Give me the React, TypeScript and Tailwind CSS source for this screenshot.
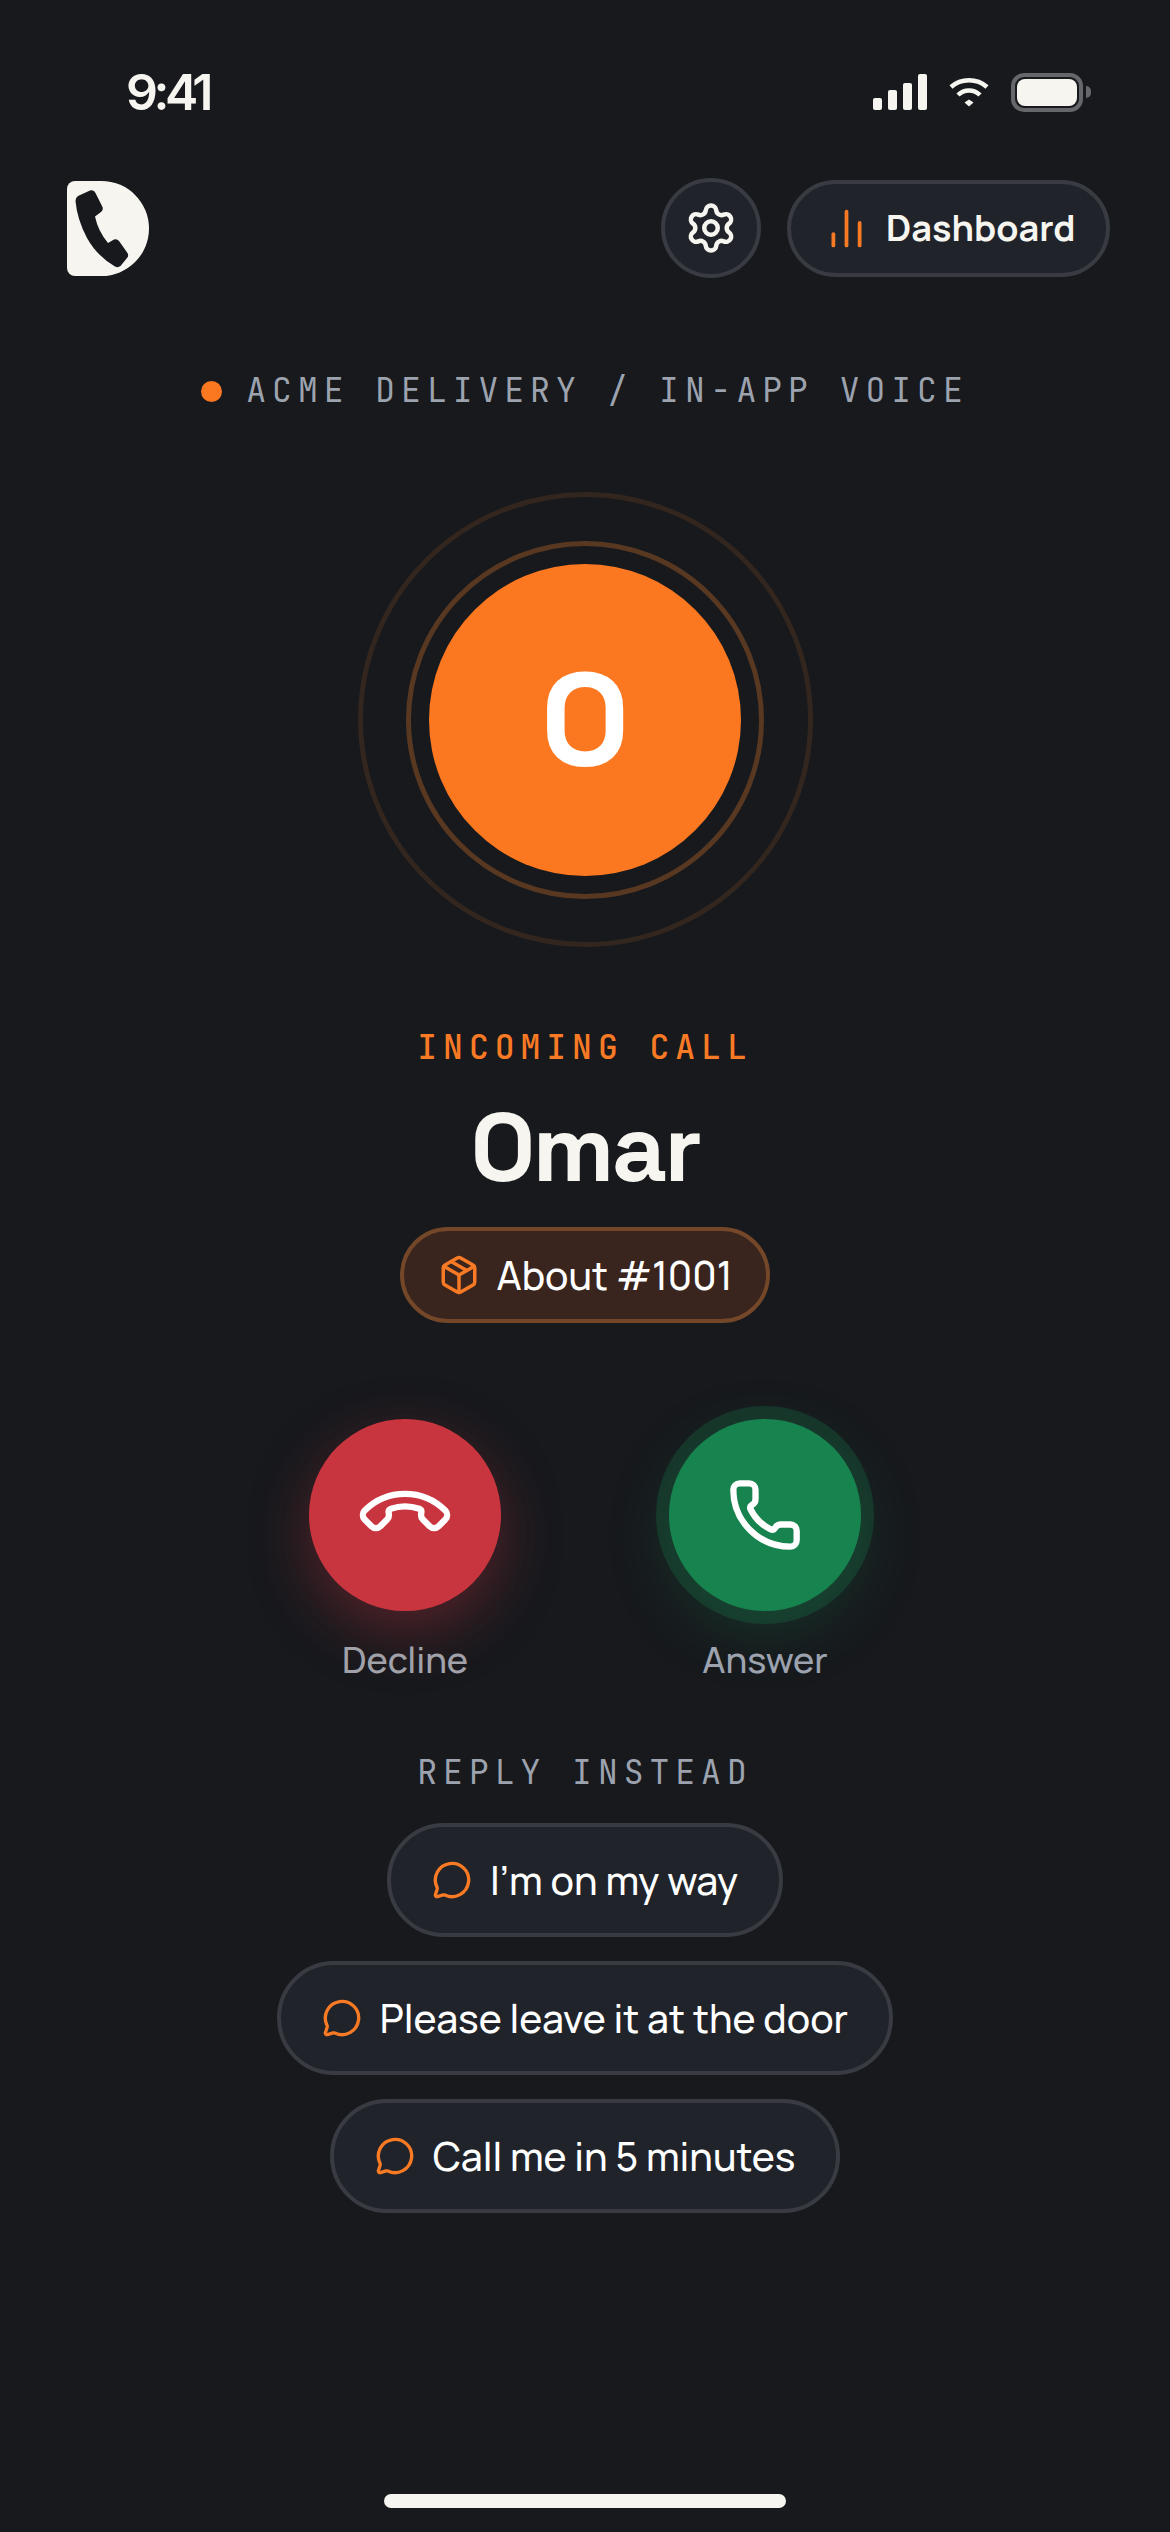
import { ChartNoAxesColumn, MessageCircle, Package, Phone, Settings } from "lucide-react";

const mono = "font-['JetBrains_Mono','Liberation_Mono',monospace]";
const display = "font-['Space_Grotesk','Inter',sans-serif]";

const replies = ["I’m on my way", "Please leave it at the door", "Call me in 5 minutes"];

const Signal: React.FC = () => (
  <div className="flex items-end gap-[6px] h-[36px]">
    <div className="w-[9px] h-[12px] rounded-[2px] bg-[#f6f5f0]" />
    <div className="w-[9px] h-[20px] rounded-[2px] bg-[#f6f5f0]" />
    <div className="w-[9px] h-[27px] rounded-[2px] bg-[#f6f5f0]" />
    <div className="w-[9px] h-[36px] rounded-[2px] bg-[#f6f5f0]" />
  </div>
);

const Wifi: React.FC = () => (
  <svg width="40" height="30" viewBox="0 0 40 30" fill="none" stroke="#f6f5f0" strokeWidth="4.5">
    <path d="M2 10C12 1 28 1 38 10" />
    <path d="M9 18C15 12 25 12 31 18" />
    <path d="M15.5 25.5L20 22.5L24.5 25.5L20 29.5Z" fill="#f6f5f0" stroke="none" />
  </svg>
);

const Battery: React.FC = () => (
  <div className="flex items-center gap-[3px]">
    <div className="w-[72px] h-[39px] rounded-[13px] border-[4px] border-[#66676a] p-[2px]">
      <div className="w-full h-full rounded-[8px] bg-[#f6f5f0]" />
    </div>
    <div className="w-[5px] h-[12px] rounded-r-full bg-[#66676a]" />
  </div>
);

const Logo: React.FC = () => (
  <svg width="82" height="95" viewBox="0 0 82 95">
    <path d="M8 0H34.5A47.5 47.5 0 0 1 34.5 95H8A8 8 0 0 1 0 87V8A8 8 0 0 1 8 0Z" fill="#f6f5f0" />
    <path
      d="M11 15L23 9.5Q27 8.5 28.5 12L35.5 26Q36.5 29 34 31L28 35.5Q31 50 41 62L47 58.5Q50 57.5 52 60L60.5 72Q62 75 60 77L53.5 85Q51 87 48 85.5Q30 75 20 57Q10 38 8.5 20Q8.5 16.5 11 15Z"
      fill="#17191d"
    />
  </svg>
);

const App: React.FC = () => {
  return (
    <div className="w-[1170px] h-[2532px] bg-[#17191d] flex flex-col font-['Manrope','Inter',sans-serif] text-[#f6f5f0] overflow-hidden">
      <div className="mt-[72px] h-[40px] pl-[126px] pr-[79px] flex items-center justify-between">
        <span className="font-['Inter',sans-serif] text-[50px] leading-none font-semibold tracking-[-0.09em]">9:41</span>
        <div className="flex items-center gap-[22px]">
          <Signal />
          <Wifi />
          <Battery />
        </div>
      </div>

      <div className="mt-[65px] h-[102px] pl-[67px] pr-[60px] flex items-center justify-between">
        <Logo />
        <div className="flex items-center gap-[26px]">
          <button className="w-[100px] h-[100px] rounded-full bg-[#20242a] border-[4px] border-[#383c42] flex items-center justify-center">
            <Settings size={54} strokeWidth={2} />
          </button>
          <button className="w-[323px] h-[97px] pl-[33px] rounded-full bg-[#20242a] border-[4px] border-[#383c42] flex items-center gap-[17px]">
            <ChartNoAxesColumn size={45} strokeWidth={2} className="text-[#f97a24]" />
            <span className="text-[36px] font-bold">Dashboard</span>
          </button>
        </div>
      </div>

      <div className={`mt-[92px] h-[40px] flex items-center justify-center gap-[24px] ${mono}`}>
        <div className="w-[21px] h-[21px] rounded-full bg-[#fb7820]" />
        <span className="text-[33px] text-[#9ca3af] tracking-[6px] whitespace-nowrap">
          ACME DELIVERY / IN-APP VOICE
        </span>
      </div>

      <div className="mt-[81px] self-center w-[455px] h-[455px] rounded-full border-[5px] border-[#33261e] flex items-center justify-center">
        <div className="w-[358px] h-[358px] rounded-full border-[5px] border-[#593822] flex items-center justify-center">
          <div className="w-[312px] h-[312px] rounded-full bg-[#fb7820] flex items-center justify-center">
            <span className={`text-[132px] leading-none font-bold text-white ${display}`}>O</span>
          </div>
        </div>
      </div>

      <div className={`mt-[80px] h-[40px] text-center text-[33px] leading-[40px] font-medium text-[#f97a24] tracking-[6px] ${mono}`}>
        INCOMING CALL
      </div>
      <div className={`mt-[31px] h-[100px] text-center text-[96px] leading-[100px] font-semibold tracking-[-0.03em] ${display}`}>
        Omar
      </div>

      <div className="mt-[29px] self-center w-[370px] h-[96px] rounded-full bg-[#3a251e] border-[4px] border-[#744729] flex items-center justify-center gap-[17px]">
        <Package size={42} strokeWidth={2} className="text-[#f97a24]" />
        <span className="text-[39px] font-medium text-white">About #1001</span>
      </div>

      <div className="mt-[96px] self-center flex gap-[168px]">
        <div className="w-[192px] flex flex-col items-center gap-[29px]">
          <button className="w-[192px] h-[192px] rounded-full bg-[#c9353f] flex items-center justify-center shadow-[0_20px_60px_rgba(201,53,63,0.35)]">
            <Phone size={76} strokeWidth={2} className="text-white rotate-[135deg]" />
          </button>
          <span className="h-[40px] text-[36px] leading-[40px] font-medium text-[#a1a1aa]">Decline</span>
        </div>
        <div className="w-[192px] flex flex-col items-center gap-[29px]">
          <button className="w-[192px] h-[192px] rounded-full bg-[#17834e] flex items-center justify-center shadow-[0_0_0_13px_rgba(23,131,78,0.25),0_20px_60px_rgba(23,131,78,0.25)]">
            <Phone size={76} strokeWidth={2} className="text-white" />
          </button>
          <span className="h-[40px] text-[36px] leading-[40px] font-medium text-[#9ca3af]">Answer</span>
        </div>
      </div>

      <div className={`mt-[72px] h-[40px] text-center text-[33px] leading-[40px] text-[#9ca3af] tracking-[6px] ${mono}`}>
        REPLY INSTEAD
      </div>

      <div className="mt-[31px] flex flex-col items-center gap-[24px]">
        {replies.map((text) => (
          <button
            key={text}
            className="h-[114px] px-[41px] rounded-full bg-[#20242a] border-[4px] border-[#383c42] flex items-center gap-[18px]"
          >
            <MessageCircle size={40} strokeWidth={2} className="text-[#f97a24]" />
            <span className="text-[39px] font-medium text-white">{text}</span>
          </button>
        ))}
      </div>

      <div className="mt-auto mb-[24px] self-center w-[402px] h-[14px] rounded-full bg-[#f6f5f0]" />
    </div>
  );
};

export default App;
